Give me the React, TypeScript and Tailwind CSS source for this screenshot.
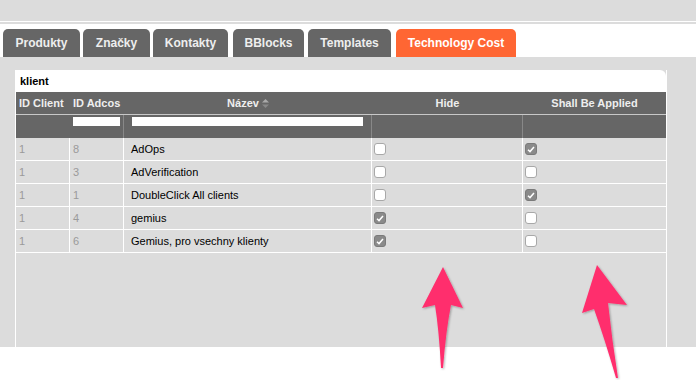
import React from 'react';

const tabs = [
  { label: "Produkty", cls: "w-[77px] ml-0" },
  { label: "Značky", cls: "w-[67px] ml-[3px]" },
  { label: "Kontakty", cls: "w-[75px] ml-[3px]" },
  { label: "BBlocks", cls: "w-[71px] ml-[5px]" },
  { label: "Templates", cls: "w-[83px] ml-[4px]" },
];

const rows = [
  { client: "1", adcos: "8", name: "AdOps", hide: false, apply: true },
  { client: "1", adcos: "3", name: "AdVerification", hide: false, apply: false },
  { client: "1", adcos: "1", name: "DoubleClick All clients", hide: false, apply: true },
  { client: "1", adcos: "4", name: "gemius", hide: true, apply: false },
  { client: "1", adcos: "6", name: "Gemius, pro vsechny klienty", hide: true, apply: false },
];

function Checkbox({ checked }: { checked: boolean }) {
  if (checked) {
    return (
      <div className="w-[12px] h-[12px] rounded-[3px] bg-[#8a8a8a] border border-[#7a7a7a] flex items-center justify-center">
        <svg width="8" height="7" viewBox="0 0 8 7">
          <path d="M1 3.8 L3 5.6 L7 1" stroke="white" strokeWidth="1.5" fill="none" />
        </svg>
      </div>
    );
  }
  return <div className="w-[12px] h-[12px] rounded-[3px] bg-white border border-[#a8a8a8]" />;
}

export default function App() {
  return (
    <div className="w-[696px] h-[380px] bg-white relative overflow-hidden font-['Liberation_Sans',Arial,sans-serif]">
      <div className="h-[21px] bg-[#dcdcdc]" />
      <div className="h-px bg-white" />
      <div className="h-[2px] bg-[#dcdcdc]" />
      <div className="h-[33px] bg-white flex items-end pl-[3px]">
        {tabs.map((t) => (
          <div
            key={t.label}
            className={`${t.cls} h-[28px] bg-[#666666] rounded-t-[5px] flex items-center justify-center text-[12px] font-bold text-[#eeeeee]`}
          >
            {t.label}
          </div>
        ))}
        <div className="w-[120px] h-[28px] ml-[5px] bg-[#ff6633] rounded-t-[5px] flex items-center justify-center text-[12px] font-bold text-white">
          Technology Cost
        </div>
      </div>

      <div className="h-[290px] bg-[#dcdcdc] pl-[15px] pt-[13px]">
        <div className="w-[652px] h-[277px] border-l border-r border-white bg-[#dcdcdc] text-[11px]">
          <div className="h-[22px] bg-white rounded-tr-[6px] flex items-center pl-[4px] font-bold text-black">
            klient
          </div>
          <div className="h-[23px] bg-[#666666] border-b border-[#c8c8c8] flex items-center font-bold text-[#eeeeee]">
            <div className="w-[54px] pl-[3px]">ID Client</div>
            <div className="w-[54px] pl-[3px]">ID Adcos</div>
            <div className="w-[248px] flex items-center justify-center gap-[3px]">
              Název
              <svg width="7" height="9" viewBox="0 0 7 9">
                <path d="M3.5 0 L7 3.5 L0 3.5 Z" fill="#aaaaaa" />
                <path d="M3.5 9 L7 5.5 L0 5.5 Z" fill="#888888" />
              </svg>
            </div>
            <div className="w-[151px] text-center">Hide</div>
            <div className="flex-1 text-center">Shall Be Applied</div>
          </div>
          <div className="h-[23px] bg-[#666666] flex">
            <div className="w-[54px]" />
            <div className="w-[54px] pl-[3px] pt-[2px] border-r border-[#888888]">
              <div className="w-[47px] h-[9px] bg-white" />
            </div>
            <div className="w-[248px] pl-[8px] pt-[2px] border-r border-[#888888]">
              <div className="w-[231px] h-[9px] bg-white" />
            </div>
            <div className="w-[151px] border-r border-[#888888]" />
            <div className="flex-1" />
          </div>
          {rows.map((r) => (
            <div key={r.adcos} className="h-[23px] flex border-b border-white">
              <div className="w-[54px] border-r border-white flex items-center pl-[3px] text-[#9a9a9a]">{r.client}</div>
              <div className="w-[54px] border-r border-white flex items-center pl-[3px] text-[#9a9a9a]">{r.adcos}</div>
              <div className="w-[248px] border-r border-white flex items-center pl-[7px] text-black">{r.name}</div>
              <div className="w-[151px] border-r border-white flex items-center pl-[2px]">
                <Checkbox checked={r.hide} />
              </div>
              <div className="flex-1 flex items-center pl-[2px]">
                <Checkbox checked={r.apply} />
              </div>
            </div>
          ))}
        </div>
      </div>

      <svg className="absolute left-0 top-0" width="696" height="380" viewBox="0 0 696 380">
        <defs>
          <filter id="sh" x="-50%" y="-50%" width="200%" height="200%">
            <feDropShadow dx="1" dy="1" stdDeviation="1" floodColor="#000" floodOpacity="0.3" />
          </filter>
        </defs>
        <path
          d="M443 267 L463 308 L451 305 Q446 330 443 368 L441 368 Q439 330 435 305 L422 308 Z"
          fill="#ff2e6d"
          filter="url(#sh)"
        />
        <path
          d="M597 265 L627 305 L608 303 Q612 340 618 378 L616 378 Q605 340 594 309 L582 313 Z"
          fill="#ff2e6d"
          filter="url(#sh)"
        />
      </svg>
    </div>
  );
}
